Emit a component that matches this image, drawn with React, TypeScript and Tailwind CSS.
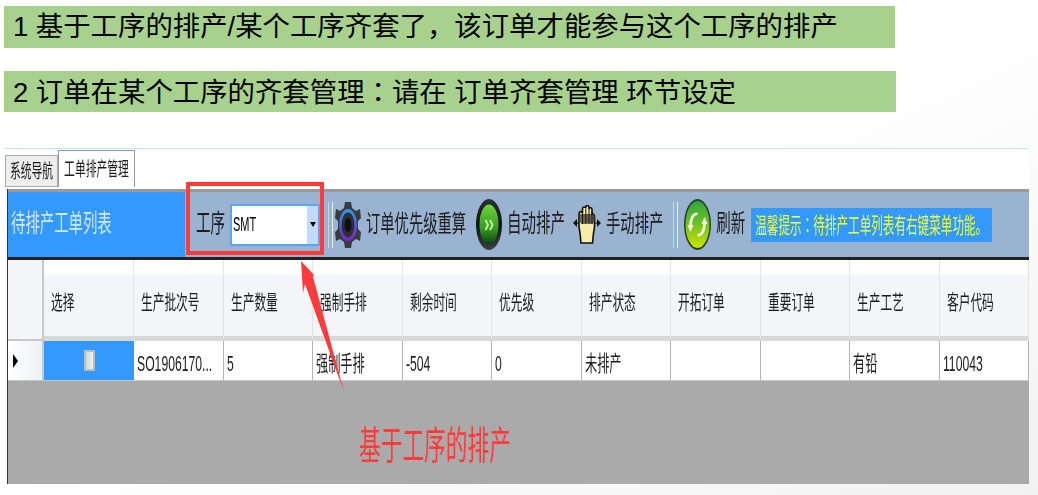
const headers = ["选择", "生产批次号", "生产数量", "强制手排", "剩余时间", "优先级", "排产状态", "开拓订单", "重要订单", "生产工艺", "客户代码"];
const cells = ["SO1906170...", "5", "强制手排", "-504", "0", "未排产", "", "", "有铅", "110043"];
const colWidths = [90, 90, 89, 90, 89, 90, 89, 90, 89, 90, 89];

const GearIcon = () => (
  <svg width="26" height="48" viewBox="0 0 26 48" className="shrink-0">
    <defs>
      <linearGradient id="ring" x1="0" y1="0" x2="0" y2="1">
        <stop offset="0" stopColor="#2f9be8" />
        <stop offset="1" stopColor="#7a22c8" />
      </linearGradient>
    </defs>
    <path
      d="M10 1h6l1 6 4 3 4-2 1 9-3 3v8l3 3-1 9-4-2-4 3-1 6h-6l-1-6-4-3-4 2-1-9 3-3v-8l-3-3 1-9 4 2 4-3z"
      fill="#3a3b40"
    />
    <ellipse cx="13" cy="24" rx="9" ry="16" fill="url(#ring)" />
    <ellipse cx="13" cy="24" rx="6.500" ry="12.500" fill="#2e2f35" />
    <ellipse cx="13" cy="24" rx="3.500" ry="7" fill="#101014" />
  </svg>
);

const AutoIcon = () => (
  <svg width="26" height="51" viewBox="0 0 26 51" className="shrink-0">
    <defs>
      <linearGradient id="go" x1="0" y1="0" x2="0" y2="1">
        <stop offset="0" stopColor="#6fd63e" />
        <stop offset="0.6" stopColor="#379a24" />
        <stop offset="1" stopColor="#0f3d12" />
      </linearGradient>
      <linearGradient id="rim" x1="0" y1="0" x2="0" y2="1">
        <stop offset="0" stopColor="#2a2f30" />
        <stop offset="0.5" stopColor="#101314" />
        <stop offset="1" stopColor="#3a4042" />
      </linearGradient>
    </defs>
    <ellipse cx="13" cy="25.500" rx="13" ry="25.500" fill="url(#rim)" />
    <ellipse cx="13" cy="25.500" rx="9.500" ry="20" fill="url(#go)" />
    <path d="M9.500 21l2.500 5-2.500 5M14 21l2.500 5-2.500 5" fill="none" stroke="#b8f09a" strokeWidth="2" />
  </svg>
);

const HandIcon = () => (
  <svg width="28" height="40" viewBox="0 0 28 40" className="shrink-0">
    <path
      d="M8 38l-1-10-1-6V9c0-3 3-3 3.500-1V4c0-2.500 3-2.500 3.300-.5V2c0-2 3-2 3.200 0v2c.5-2 3-1.500 3 .5V10c.5-1.500 2.500-1 2.500 1v11l-1 6-1 10z"
      fill="#f6eea6"
      stroke="#111"
      strokeWidth="1.600"
    />
    <path d="M6 9h15.500v7l-2 3h-11l-2.500-3z" fill="#3a3a30" opacity="0.75" />
    <path d="M9.500 6v13M12.800 4v14M16 4v14M19 6v13" stroke="#111" strokeWidth="1" />
    <path d="M0 18l4-4v8zM28 18l-4-4v8z" fill="#111" />
    <path d="M3 18h3M22 18h3" stroke="#111" strokeWidth="1.200" />
  </svg>
);

const RefreshIcon = () => (
  <svg width="27" height="51" viewBox="0 0 27 51" className="shrink-0">
    <defs>
      <linearGradient id="fresh" x1="0" y1="0" x2="0" y2="1">
        <stop offset="0" stopColor="#2fa53c" />
        <stop offset="0.5" stopColor="#72c21f" />
        <stop offset="1" stopColor="#cfe400" />
      </linearGradient>
    </defs>
    <ellipse cx="13.500" cy="25.500" rx="13.500" ry="25.500" fill="#27402a" />
    <ellipse cx="13.500" cy="25.500" rx="12" ry="23.500" fill="url(#fresh)" />
    <path d="M6.500 28c0-8 2.500-13 7-13.500" fill="none" stroke="#f6fbe8" strokeWidth="2.600" />
    <path d="M20.500 23c0 8-2.500 13-7 13.500" fill="none" stroke="#f6fbe8" strokeWidth="2.600" />
    <path d="M3.500 26h6l-3 7z" fill="#f6fbe8" />
    <path d="M23.500 25h-6l3-7z" fill="#f6fbe8" />
  </svg>
);

const Separator = () => (
  <div className="flex w-[5px] h-[46px] justify-between shrink-0">
    <div className="w-[1px] bg-[#c8d4e2]" />
    <div className="w-[1px] bg-[#e6ecf3]" />
  </div>
);

const App = () => {
  return (
    <div className="relative w-[1038px] h-[495px] overflow-hidden pt-[6px] bg-linear-to-br from-white from-50% to-[#f2f2f2] font-['Liberation_Sans','Noto_Sans_CJK_SC',sans-serif] text-[#1c1c1c]">
      <div className="ml-[4px] w-[891px] h-[42px] bg-[#a9d18e] pl-[9px] flex items-center text-[27.400px] text-black whitespace-nowrap">
        <span>1 基于工序的排产/某个工序齐套了，该订单才能参与这个工序的排产</span>
      </div>
      <div className="ml-[4px] mt-[23px] w-[892px] h-[41px] bg-[#a9d18e] pl-[9px] flex items-center text-[27.400px] text-black whitespace-nowrap">
        <span>
          2 订单在某个工序的齐套管理<span className="font-['Noto_Sans_CJK_TC']">：</span>请在 订单齐套管理 环节设定
        </span>
      </div>

      {/* window */}
      <div className="ml-[4px] mt-[36px] w-[1025px] border-t border-[#bfe9f6] blur-[0.4px]">
        <div className="flex items-end h-[40px] bg-white pl-[1px] pb-[2px]">
          <div className="w-[53px] h-[32px] bg-[#eeeeee] border border-[#aaaaaa] flex items-center justify-center">
            <span className="inline-block whitespace-nowrap text-[10.800px] scale-y-[1.8]">系统导航</span>
          </div>
          <div className="w-[77px] h-[37px] bg-white border border-b-0 border-[#999999] flex items-center justify-center">
            <span className="inline-block whitespace-nowrap text-[10.800px] scale-y-[1.8]">工单排产管理</span>
          </div>
        </div>

        <div className="ml-[3px] border-l border-[#333333] bg-[#aaaaaa]">
          {/* toolbar */}
          <div className="flex items-center h-[68px] bg-[#9ab3d1] border-t-[3px] border-[#9a9a9a]">
            <div className="w-[177px] h-full bg-[#3399ff] pl-[3px] flex items-center shrink-0">
              <span className="inline-block whitespace-nowrap text-[14.400px] scale-y-[1.75] text-[#d4e8ff]">待排产工单列表</span>
            </div>
            <span className="ml-[11px] inline-block whitespace-nowrap text-[14.500px] scale-y-[1.75] shrink-0">工序</span>
            <div className="ml-[5px] w-[90px] h-[42px] bg-white border-2 border-[#5aa5f5] flex shrink-0">
              <span className="flex-1 pl-[1px] flex items-center">
                <span className="inline-block text-[11px] scale-y-[1.8] text-black">SMT</span>
              </span>
              <span className="w-[11px] bg-[#bfdcff] flex items-center justify-center">
                <span className="w-0 h-0 border-x-[3px] border-x-transparent border-t-[5px] border-t-black" />
              </span>
            </div>
            <div className="ml-[8px] shrink-0"><Separator /></div>
            <div className="ml-[2px] shrink-0"><GearIcon /></div>
            <span className="ml-[5px] inline-block whitespace-nowrap text-[14.300px] scale-y-[1.7] shrink-0">订单优先级重算</span>
            <div className="ml-[10px] shrink-0"><AutoIcon /></div>
            <span className="ml-[5px] inline-block whitespace-nowrap text-[14.500px] scale-y-[1.7] shrink-0">自动排产</span>
            <div className="ml-[8px] shrink-0"><HandIcon /></div>
            <span className="ml-[5px] inline-block whitespace-nowrap text-[14.300px] scale-y-[1.7] shrink-0">手动排产</span>
            <div className="ml-[10px] shrink-0"><Separator /></div>
            <div className="ml-[6px] shrink-0"><RefreshIcon /></div>
            <span className="ml-[5px] inline-block whitespace-nowrap text-[14.500px] scale-y-[1.7] shrink-0">刷新</span>
            <div className="ml-[6px] w-[241px] h-[34px] bg-[#3399ff] pl-[4px] flex items-center shrink-0">
              <span className="inline-block whitespace-nowrap text-[11.600px] scale-y-[1.85] text-[#e9ff3a]">
                温馨提示<span className="font-['Noto_Sans_CJK_TC']">：</span>待排产工单列表有右键菜单功能。
              </span>
            </div>
          </div>
          <div className="h-[3px] bg-[#222222]" />

          {/* grid header */}
          <div className="flex h-[81px] bg-white">
            <div className="w-[36px] bg-[#f3f5f8] border-r-2 border-[#c8c8c8] border-b-2 shrink-0" />
            {headers.map((h, i) => (
              <div
                key={h}
                className="h-full border-r border-[#e2e4e8] border-b-[5px] border-b-[#d8d8d8] bg-linear-to-b from-white from-20% to-[#f3f5f8] to-20% pl-[7px] pt-[30px] shrink-0"
                style={{ width: colWidths[i] }}
              >
                <span className="inline-block whitespace-nowrap text-[11.700px] scale-y-[1.7]">{h}</span>
              </div>
            ))}
          </div>

          {/* grid row */}
          <div className="flex h-[40px] border-b border-[#c4c4c4]">
            <div className="w-[36px] bg-linear-to-r from-white to-[#eef0f3] border-r-2 border-[#c8c8c8] flex items-center pl-[5px] shrink-0">
              <span className="w-0 h-0 border-y-[7px] border-y-transparent border-l-[5px] border-l-black" />
            </div>
            <div className="w-[90px] bg-[#3399ff] flex items-center justify-center shrink-0">
              <span className="w-[11px] h-[21px] bg-linear-to-r from-[#d2d6da] to-[#eef0f2] border-2 border-[#b9bcc0]" />
            </div>
            {cells.map((c, i) => (
              <div
                key={i}
                className="h-full bg-white border-r border-[#b4b4b4] pl-[3px] pt-[8px] flex items-center overflow-hidden shrink-0"
                style={{ width: colWidths[i + 1] }}
              >
                <span className="inline-block whitespace-nowrap text-[12.200px] scale-y-[1.75]">{c}</span>
              </div>
            ))}
          </div>

          <div className="h-[103px] bg-[#aaaaaa]" />
        </div>
      </div>

      {/* annotations over the screenshot */}
      <div className="absolute left-[186px] top-[182px] w-[138px] h-[73px] border-[4px] border-[#ff3b3b]" />
      <svg className="absolute left-0 top-0" width="1038" height="495" viewBox="0 0 1038 495">
        <polygon points="301,261 314,275 313,277 344,392 305,284 303,293" fill="#ff3b3b" />
      </svg>
      <div className="absolute left-[359px] top-[428px] inline-block whitespace-nowrap text-[21.700px] leading-[36px] scale-y-[1.8] text-[#ff3b3b]">
        基于工序的排产
      </div>
    </div>
  );
};

export default App;
